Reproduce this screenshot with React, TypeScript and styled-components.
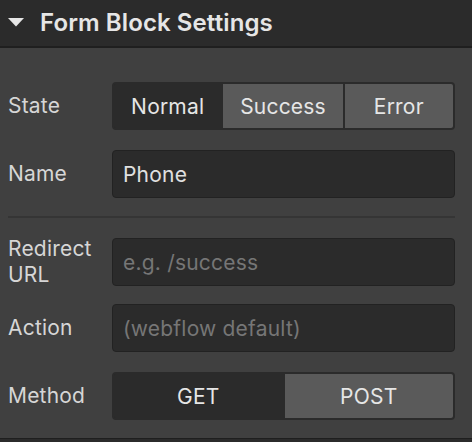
import React from "react";
import styled, { createGlobalStyle } from "styled-components";

const Global = createGlobalStyle`
  html, body { margin: 0; padding: 0; background: #404040; }
  body { font-family: Inter, "Noto Sans", sans-serif; -webkit-font-smoothing: antialiased; }
  * { box-sizing: border-box; }
`;

const Panel = styled.div`
  width: 472px;
  height: 442px;
  background: #404040;
  display: flex;
  flex-direction: column;
  overflow: hidden;
`;

const Header = styled.div`
  height: 48px;
  flex: none;
  background: #2b2b2b;
  border-bottom: 2px solid #1f1f1f;
  display: flex;
  align-items: center;
  padding: 0 8px 2px 8px;
  gap: 16px;
  color: #e6e6e6;
  font-size: 24px;
  font-weight: 600;
  letter-spacing: 0.1px;
`;

const Caret = styled.svg`
  width: 16px;
  height: 9px;
  flex: none;
`;

const Body = styled.div`
  flex: 1;
  padding: 34px 17px 0 8px;
  display: flex;
  flex-direction: column;
`;

const Row = styled.div<{ $mb?: number }>`
  display: grid;
  grid-template-columns: 104px 1fr;
  align-items: center;
  height: 48px;
  margin-bottom: ${(p) => p.$mb ?? 20}px;
`;

const Label = styled.div`
  color: #d6d6d6;
  font-size: 21px;
  line-height: 26px;
  letter-spacing: 0.2px;
`;

const Segmented = styled.div<{ $cols: string }>`
  display: grid;
  grid-template-columns: ${(p) => p.$cols};
  height: 48px;
  border: 2px solid #2b2b2b;
  border-radius: 4px;
  background: #2b2b2b;
  gap: 2px;
  overflow: hidden;
`;

const Segment = styled.div<{ $active?: boolean }>`
  display: flex;
  align-items: center;
  justify-content: center;
  background: ${(p) => (p.$active ? "#2b2b2b" : "#5a5a5a")};
  color: #e6e6e6;
  font-size: 21px;
  letter-spacing: 0.2px;
`;

const Input = styled.div<{ $placeholder?: boolean }>`
  height: 48px;
  background: #2b2b2b;
  border: 1px solid #222222;
  border-radius: 4px;
  display: flex;
  align-items: center;
  padding: 0 10px;
  font-size: 21px;
  letter-spacing: 0.2px;
  color: ${(p) => (p.$placeholder ? "#767676" : "#e0e0e0")};
`;

const Divider = styled.div`
  height: 2px;
  background: #353535;
  margin: 0 0 18px 0;
`;

const Footer = styled.div`
  height: 4px;
  flex: none;
  background: #2b2b2b;
  border-top: 1px solid #1f1f1f;
`;

export default function App() {
  return (
    <>
      <Global />
      <Panel>
        <Header>
          <Caret viewBox="0 0 16 9">
            <polygon points="0,0 16,0 8,8.5" fill="#e6e6e6" />
          </Caret>
          Form Block Settings
        </Header>
        <Body>
          <Row>
            <Label>State</Label>
            <Segmented $cols="108fr 120fr 109fr">
              <Segment $active>Normal</Segment>
              <Segment>Success</Segment>
              <Segment>Error</Segment>
            </Segmented>
          </Row>
          <Row $mb={18}>
            <Label>Name</Label>
            <Input>Phone</Input>
          </Row>
          <Divider />
          <Row>
            <Label>
              Redirect
              <br />
              URL
            </Label>
            <Input $placeholder>e.g. /success</Input>
          </Row>
          <Row>
            <Label>Action</Label>
            <Input $placeholder>(webflow default)</Input>
          </Row>
          <Row $mb={0}>
            <Label>Method</Label>
            <Segmented $cols="1fr 1fr">
              <Segment $active>GET</Segment>
              <Segment>POST</Segment>
            </Segmented>
          </Row>
        </Body>
        <Footer />
      </Panel>
    </>
  );
}
